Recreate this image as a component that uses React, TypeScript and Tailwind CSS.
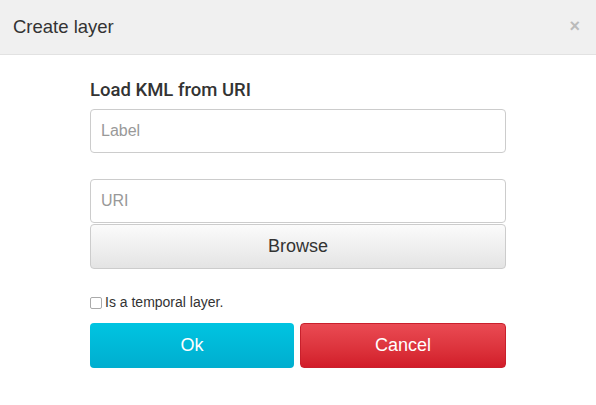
import { useState } from 'react';

export default function App() {
  const [temporal, setTemporal] = useState(false);

  return (
    <div className="w-[596px] h-[405px] bg-white font-['Liberation_Sans',Arial,sans-serif] text-[#333]">
      {/* Header */}
      <div className="h-[55px] bg-[#f0f0f0] border-b border-[#e2e2e2] flex items-center justify-between pl-[13px] pr-[16px]">
        <h1 className="text-[18.5px] leading-none text-[#333] pt-[1px]">Create layer</h1>
        <button className="text-[#bbb] text-[18px] leading-none font-bold pb-[2px]">×</button>
      </div>

      {/* Body */}
      <div className="w-[416px] ml-[90px] pt-[25px]">
        <h2 className="text-[18.5px] leading-[20px] font-medium font-['Roboto',sans-serif] text-[#333] mb-[9px]">
          Load KML from URI
        </h2>
        <input
          placeholder="Label"
          className="block w-full h-[44px] px-[10px] border border-[#ccc] rounded-[4px] text-[16px] placeholder:text-[#999] outline-none"
        />
        <input
          placeholder="URI"
          className="block w-full h-[44px] mt-[26px] px-[10px] border border-[#ccc] rounded-[4px] text-[16px] placeholder:text-[#999] outline-none"
        />
        <button className="block w-full h-[45px] mt-[1px] border border-[#ccc] rounded-[4px] bg-gradient-to-b from-[#fbfbfb] to-[#e4e4e4] text-[18px] text-[#333]">
          Browse
        </button>

        <label className="flex items-center gap-[3px] mt-[23px] text-[14px] text-[#333]">
          <input
            type="checkbox"
            checked={temporal}
            onChange={(e) => setTemporal(e.target.checked)}
            className="appearance-none w-[12px] h-[12px] border border-[#aaa] rounded-[2px] bg-white"
          />
          Is a temporal layer.
        </label>

        <div className="flex gap-[6px] mt-[10px]">
          <button className="flex-1 h-[45px] rounded-[4px] bg-gradient-to-b from-[#00c4e1] to-[#00aecf] text-white text-[18px]">
            Ok
          </button>
          <button className="flex-1 h-[45px] rounded-[4px] border border-[#c9202c] bg-gradient-to-b from-[#ea4a53] to-[#d21c29] text-white text-[18px]">
            Cancel
          </button>
        </div>
      </div>
    </div>
  );
}
